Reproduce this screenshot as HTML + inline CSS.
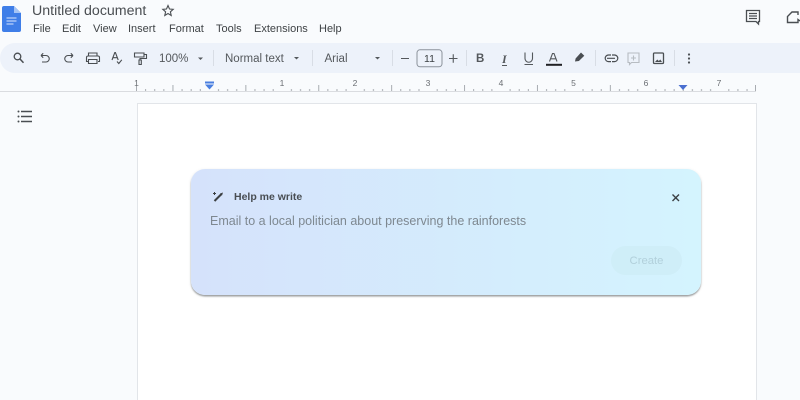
<!DOCTYPE html>
<html><head><meta charset="utf-8"><style>
html,body{margin:0;padding:0;width:800px;height:400px;overflow:hidden;background:#f9fbfd}
#w{position:absolute;left:0;top:0;width:800px;height:400px;overflow:hidden;background:#f9fbfd;font-family:"Liberation Sans",sans-serif;color:#3c4043;filter:blur(.3px)}
.a{position:absolute;white-space:nowrap;line-height:1}
svg{position:absolute;overflow:visible}
.i{fill:none;stroke:#4a4e52;stroke-width:1.100}
.m{font-size:11px;top:23.500px;color:#3f4346}
.t{font-size:11.500px;top:53.500px;color:#54585c}
.s{background:#d8dde5;width:1px;height:16px;top:50px;position:absolute}
.r{font-size:8.500px;top:79px;color:#6a6e73;transform:translateX(-50%)}
</style></head><body><div id="w">
<div class="a" style="left:32px;top:3.500px;font-size:14.200px;color:#4a4e52">Untitled document</div>
<svg style="left:0;top:0" width="800" height="43">
<path d="M2 8a2 2 0 0 1 2-2h10l7 7v17a2 2 0 0 1-2 2H4a2 2 0 0 1-2-2z" fill="#3f7ee8"/>
<path d="M14 6l7 7h-7z" fill="#a5c4f5"/>
<path d="M6.500 18h10M6.500 21h10M6.500 24h7" stroke="#dbe7fb" stroke-width="1.100"/>
<path d="M168 5.500l1.500 3.500 3.700.3-2.800 2.500.8 3.700-3.200-2-3.200 2 .8-3.700-2.800-2.500 3.700-.3z" fill="none" stroke="#4a4e52" stroke-width="1.100"/>
<path d="M746.500 10.500h13v11h-1v2.500l-2.500-2.500h-9.500z M749 13.500h8M749 16h8M749 18.500h8" fill="none" stroke="#4a4e52" stroke-width="1.300"/>
<path d="M798 15v-3h-6l-4.500 4.500V22.500h10.500v-3l2 1.500" fill="none" stroke="#4a4e52" stroke-width="1.400"/>
</svg>
<div class="a m" style="left:33px">File</div>
<div class="a m" style="left:62px">Edit</div>
<div class="a m" style="left:93px">View</div>
<div class="a m" style="left:128px">Insert</div>
<div class="a m" style="left:169px">Format</div>
<div class="a m" style="left:216px">Tools</div>
<div class="a m" style="left:254px">Extensions</div>
<div class="a m" style="left:319px">Help</div>

<div class="a" style="left:0;top:43px;width:800px;height:30px;background:#edf2fa;border-radius:15px 0 0 15px"></div>
<svg style="left:0;top:0" width="800" height="80">
<g class="i">
<circle cx="17.500" cy="56.500" r="3.300" stroke-width="1.300"/><path d="M20 59l3.500 3.800" stroke-width="1.500"/>
<path d="M41 55.500h5a3.200 3.200 0 0 1 0 6.500h-4M41 55.500l2.200-2.200M41 55.500l2.200 2.200"/>
<path d="M73 55.500h-5a3.200 3.200 0 0 0 0 6.500h4M73 55.500l-2.200-2.200M73 55.500l-2.200 2.200"/>
<path d="M88.500 56v-3h8.500v3M88 61.500h-1.500v-4a1.500 1.500 0 0 1 1.500-1.500h10a1.500 1.500 0 0 1 1.500 1.500v4H98M88.500 59.500h8.500v4h-8.500z"/>
<path d="M134.500 55.500v-2.500h9.500v4h-9.500zM144 54.500h2.500V58.500h-6.500V60M139 60h2.300v4.500H139z"/>
<path d="M112 60l2.800-7.500h.6l2.800 7.500M113 57.700h4.500M117 61.500l1.800 2 3-3.700"/>
</g>
<path d="M198 57.500l2.500 2.500 2.500-2.500z" fill="#54585c"/>
<path d="M294 57l2.500 2.500 2.500-2.500z" fill="#54585c"/>
<path d="M375 57l2.500 2.500 2.500-2.500z" fill="#54585c"/>
<path d="M401 58.500h8M449 58.500h8.500M453.250 54.200v8.500" stroke="#54585c" stroke-width="1.100" fill="none"/>
<rect x="417" y="49.800" width="25" height="17" rx="3" fill="none" stroke="#8b929b" stroke-width="1"/>
<path d="M546 64.800h16" stroke="#202124" stroke-width="2"/>
<path d="M549.500 61.500l3-8h1.500l3 8M551 58.800h4.500" stroke="#54585c" stroke-width="1.100" fill="none"/>
<path d="M525 52.500v6a3.500 3.500 0 0 0 7.500 0v-6M524.500 64.500h8.500" stroke="#54585c" stroke-width="1.100" fill="none"/>
<path d="M575 61.500l.6-3 5.400-6 3.300 3.300-5.400 5.200z" fill="#4a4e52"/>
<g class="i">
<path d="M611 55h-2.500a3.300 3.300 0 0 0 0 6.600h2.500M607 58.300h8M612 55h2.500a3.300 3.300 0 0 1 0 6.600H612" stroke-width="1.200"/>
<path d="M628 53h11v9.500h-7.500l-2 2v-2H628z" stroke="#b7bcc2"/>
<path d="M633.500 55.500v5M631 58h5" stroke="#b7bcc2"/>
<rect x="653.500" y="53" width="10" height="10.500" rx="1" stroke-width="1.300"/>
<path d="M655 62l2.300-2.500 1.500 1.500 1.500-1.500 1.700 2.500z" fill="#4a4e52" stroke="none"/>
</g>
<circle cx="689" cy="54.500" r="1.100" fill="#4a4e52"/><circle cx="689" cy="58.500" r="1.100" fill="#4a4e52"/><circle cx="689" cy="62.500" r="1.100" fill="#4a4e52"/>
</svg>
<div class="a t" style="left:159px">100%</div>
<div class="a t" style="left:225px">Normal text</div>
<div class="a t" style="left:324.500px">Arial</div>
<div class="a" style="left:417px;top:53.500px;width:25px;text-align:center;font-size:10.500px;color:#3c4043">11</div>
<div class="a" style="left:476px;top:54px;font-size:11.500px;font-weight:bold;color:#54585c">B</div>
<div class="a" style="left:502px;top:53.500px;font-size:12px;font-weight:bold;font-style:italic;color:#54585c;font-family:'Liberation Serif',serif;border-bottom:1.200px solid #54585c;line-height:11px">I</div>
<div class="s" style="left:213px"></div>
<div class="s" style="left:312px"></div>
<div class="s" style="left:392px"></div>
<div class="s" style="left:466px"></div>
<div class="s" style="left:595px"></div>
<div class="s" style="left:674px"></div>

<svg style="left:0;top:0" width="800" height="100">
<defs><pattern id="p" x="136.500" y="78" width="72.900" height="13" patternUnits="userSpaceOnUse">
<path d="M9.110 11v2M18.220 11v2M27.340 11v2M36.450 7v6M45.560 11v2M54.670 11v2M63.790 11v2" stroke="#a8acb1" stroke-width="1" fill="none"/>
</pattern></defs>
<rect x="136.500" y="78" width="619" height="13" fill="url(#p)"/>
<path d="M0 91.500h756" stroke="#dadce0" stroke-width="1"/>
<path d="M136.500 86v5M755.500 85v6" stroke="#a8acb1"/>
<rect x="205" y="81.500" width="9" height="2" fill="#4a7fe0"/>
<path d="M205 84.500h9l-4.500 5z" fill="#4a7fe0"/>
<path d="M678.500 85h9l-4.500 5z" fill="#4a6fd0"/>
</svg>
<div class="a r" style="left:136.500px">1</div>
<div class="a r" style="left:282px">1</div>
<div class="a r" style="left:355px">2</div>
<div class="a r" style="left:428px">3</div>
<div class="a r" style="left:501px">4</div>
<div class="a r" style="left:573.500px">5</div>
<div class="a r" style="left:646px">6</div>
<div class="a r" style="left:719px">7</div>

<svg style="left:0;top:100px" width="40" height="30">
<path d="M21 11.500h11M21 16.500h11M21 21.500h11" stroke="#4a4e52" stroke-width="1.500" fill="none"/>
<circle cx="18.500" cy="11.500" r="1" fill="#4a4e52"/><circle cx="18.500" cy="16.500" r="1" fill="#4a4e52"/><circle cx="18.500" cy="21.500" r="1" fill="#4a4e52"/>
</svg>

<div style="position:absolute;left:137px;top:103px;width:618px;height:297px;background:#fff;border:1px solid #e2e5e9;border-bottom:0;box-sizing:content-box;height:296px"></div>

<div style="position:absolute;left:190.500px;top:168.500px;width:510.500px;height:126px;border-radius:14px;background:linear-gradient(90deg,#d5e2fb 0%,#d4f4fe 100%);box-shadow:0 1.500px 1.500px rgba(60,64,67,.45),0 1px 3px rgba(60,64,67,.12)"></div>
<svg style="left:0;top:0" width="800" height="400">
<path d="M214.500 201l7-7" stroke="#3c4043" stroke-width="2" fill="none"/>
<path d="M220 193.500l3-1-1 3z" fill="#3c4043"/>
<path d="M214.500 192v3M213 193.500h3" stroke="#3c4043" stroke-width="1"/>
<path d="M672.500 194.500l6.500 6.500M679 194.500l-6.500 6.500" stroke="#3a3f43" stroke-width="1.400" fill="none"/>
</svg>
<div class="a" style="left:234px;top:192px;font-size:10.500px;font-weight:bold;color:#484d52">Help me write</div>
<div class="a" style="left:210px;top:214.500px;font-size:12.500px;color:#7e8890">Email to a local politician about preserving the rainforests</div>
<div class="a" style="left:611px;top:246px;width:71px;height:29px;border-radius:15px;background:#cfeef8;text-align:center;line-height:30px;font-size:11.300px;color:#b2d0db">Create</div>
</div></body></html>
